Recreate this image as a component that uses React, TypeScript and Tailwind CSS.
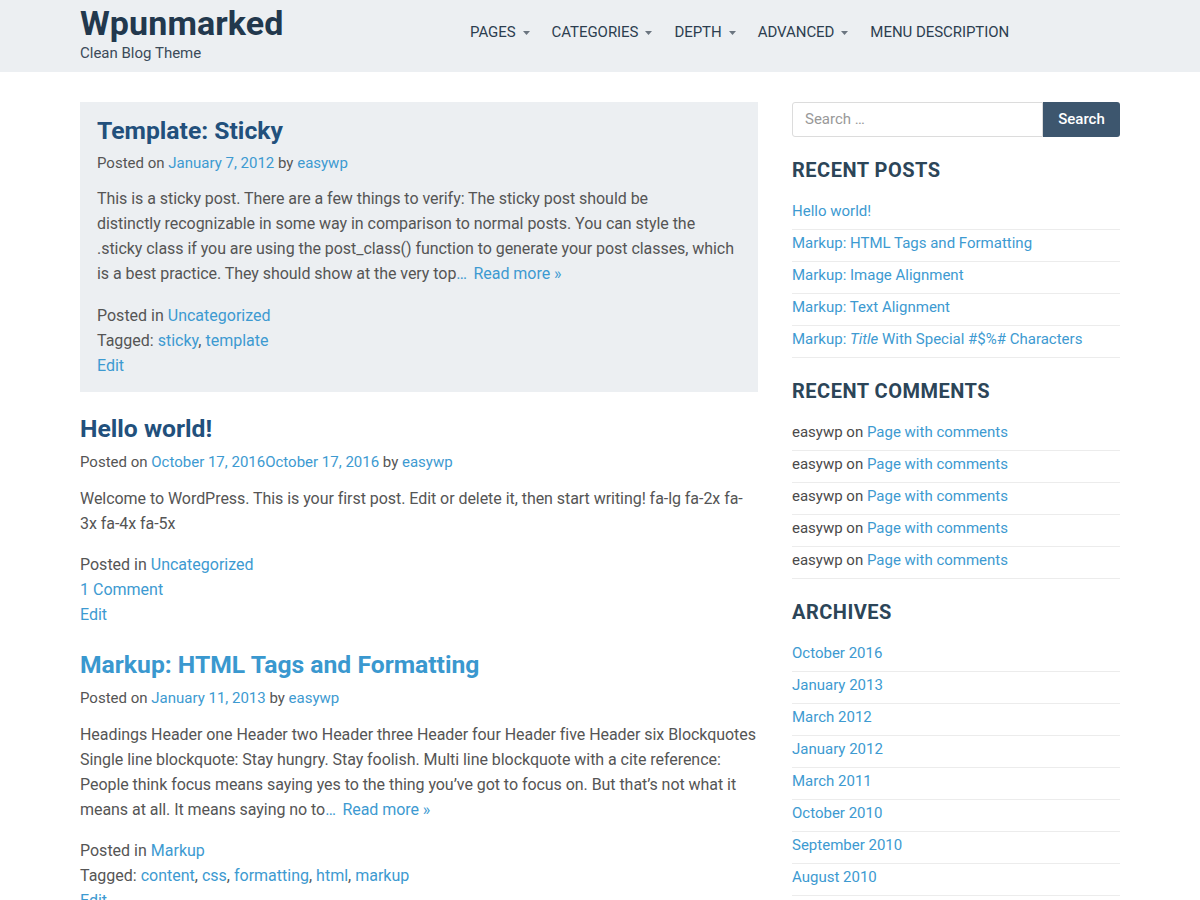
import React from 'react'

const link = 'text-[#3d9ad1]'

function Caret() {
    return (
        <svg width="7" height="4" viewBox="0 0 7 4" className="ml-[7px] mt-[1px]">
            <path d="M0 0h7L3.5 4z" fill="#6b7580" />
        </svg>
    )
}

const nav = [
    { label: 'PAGES', sub: true },
    { label: 'CATEGORIES', sub: true },
    { label: 'DEPTH', sub: true },
    { label: 'ADVANCED', sub: true },
    { label: 'MENU DESCRIPTION', sub: false },
]

function Header() {
    return (
        <header className="bg-[#eceff2] h-[72px]">
            <div className="w-[1040px] mx-auto flex items-start">
                <div className="w-[390px] shrink-0 pt-[4px]">
                    <h1 className="text-[34px] leading-[38px] font-bold text-[#22384d] tracking-[0.1px]">Wpunmarked</h1>
                    <p className="text-[15px] leading-[20px] mt-[1px] text-[#3b4a59]">Clean Blog Theme</p>
                </div>
                <nav className="flex items-center gap-[22px] h-[64px] tracking-[-0.05px]">
                    {nav.map((n) => (
                        <div key={n.label} className="flex items-center text-[15px] text-[#2c3e50]">
                            <span>{n.label}</span>
                            {n.sub && <Caret />}
                        </div>
                    ))}
                </nav>
            </div>
        </header>
    )
}

function Meta({ children, sticky }: { children: React.ReactNode; sticky?: boolean }) {
    return <p className={`text-[15px] leading-[25px] text-[#555] ${sticky ? 'mt-[4px]' : 'mt-[5px]'}`}>{children}</p>
}

// the excerpt's ellipsis sits tight on the last word, then a gap before the link
function ReadMore() {
    return (
        <span className={link}>
            <span className="pr-[5px] tracking-[1.5px]">…</span>Read more »
        </span>
    )
}

const title = 'text-[24.7px] leading-[32px] font-bold'
const body = 'text-[16px] leading-[25px] text-[#555] tracking-[-0.05px]'

function Main() {
    return (
        <main className="w-[678px] shrink-0">
            {/* sticky */}
            <article className="bg-[#eceff2] px-[17px] pt-[13px] pb-[14px] mb-[21px]">
                <h2 className={`${title} text-[#22507c]`}>Template: Sticky</h2>
                <Meta sticky>
                    Posted on <span className={link}>January 7, 2012</span> by <span className={link}>easywp</span>
                </Meta>
                <p className={`${body} mt-[10px]`}>
                    This is a sticky post. There are a few things to verify: The sticky post should be<br />
                    distinctly recognizable in some way in comparison to normal posts. You can style the<br />
                    .sticky class if you are using the post_class() function to generate your post classes, which<br />
                    is a best practice. They should show at the very top<ReadMore />
                </p>
                <div className="text-[16px] leading-[25px] text-[#555] mt-[17px]">
                    <p>Posted in <span className={link}>Uncategorized</span></p>
                    <p>Tagged: <span className={link}>sticky</span>, <span className={link}>template</span></p>
                    <p className={link}>Edit</p>
                </div>
            </article>

            <article className="mb-[22px]">
                <h2 className={`${title} text-[#22507c]`}>Hello world!</h2>
                <Meta>
                    Posted on <span className={link}>October 17, 2016October 17, 2016</span> by <span className={link}>easywp</span>
                </Meta>
                <p className={`${body} mt-[11px]`}>
                    Welcome to WordPress. This is your first post. Edit or delete it, then start writing! fa-lg fa-2x fa-3x fa-4x fa-5x
                </p>
                <div className="text-[16px] leading-[25px] text-[#555] mt-[16px]">
                    <p>Posted in <span className={link}>Uncategorized</span></p>
                    <p className={link}>1 Comment</p>
                    <p className={link}>Edit</p>
                </div>
            </article>

            <article>
                <h2 className={`${title} text-[#3a98cf]`}>Markup: HTML Tags and Formatting</h2>
                <Meta>
                    Posted on <span className={link}>January 11, 2013</span> by <span className={link}>easywp</span>
                </Meta>
                <p className={`${body} mt-[11px] tracking-[-0.1px]`}>
                    Headings Header one Header two Header three Header four Header five Header six Blockquotes<br />
                    Single line blockquote: Stay hungry. Stay foolish. Multi line blockquote with a cite reference:<br />
                    People think focus means saying yes to the thing you’ve got to focus on. But that’s not what it<br />
                    means at all. It means saying no to<ReadMore />
                </p>
                <div className="text-[16px] leading-[25px] text-[#555] mt-[16px]">
                    <p>Posted in <span className={link}>Markup</span></p>
                    <p>
                        Tagged: <span className={link}>content</span>, <span className={link}>css</span>, <span className={link}>formatting</span>, <span className={link}>html</span>, <span className={link}>markup</span>
                    </p>
                    <p className={link}>Edit</p>
                </div>
            </article>
        </main>
    )
}

function Widget({ title, children }: { title: string; children: React.ReactNode }) {
    return (
        <section className="mt-[21px]">
            <h3 className="text-[20px] leading-[24px] font-bold text-[#2c4558] uppercase tracking-[0.5px]">{title}</h3>
            <ul className="mt-[16px]">{children}</ul>
        </section>
    )
}

function Item({ children }: { children: React.ReactNode }) {
    return <li className="text-[15px] leading-[22px] pt-[2px] pb-[7px] border-b border-[#ececec]">{children}</li>
}

const archives = ['October 2016', 'January 2013', 'March 2012', 'January 2012', 'March 2011', 'October 2010', 'September 2010', 'August 2010']

function Sidebar() {
    return (
        <aside className="w-[328px] shrink-0">
            <div className="flex h-[35px]">
                <div className="flex-1 border border-[#dcdcdc] rounded-l-[3px] flex items-center px-[12px] text-[15px] text-[#999]">
                    Search …
                </div>
                <div className="w-[77px] bg-[#3d566e] rounded-r-[3px] flex items-center justify-center text-white text-[15px] font-medium">
                    Search
                </div>
            </div>
            <Widget title="Recent Posts">
                <Item><span className={link}>Hello world!</span></Item>
                <Item><span className={link}>Markup: HTML Tags and Formatting</span></Item>
                <Item><span className={link}>Markup: Image Alignment</span></Item>
                <Item><span className={link}>Markup: Text Alignment</span></Item>
                <Item><span className={link}>Markup: <em>Title</em> With Special #$%# Characters</span></Item>
            </Widget>
            <Widget title="Recent Comments">
                {[0, 1, 2, 3, 4].map((i) => (
                    <Item key={i}>
                        <span className="text-[#4a4a4a]">easywp on </span>
                        <span className={link}>Page with comments</span>
                    </Item>
                ))}
            </Widget>
            <Widget title="Archives">
                {archives.map((a) => (
                    <Item key={a}><span className={link}>{a}</span></Item>
                ))}
            </Widget>
        </aside>
    )
}

export default function App() {
    return (
        <div className="font-['Roboto','Liberation_Sans',sans-serif] bg-white min-h-[900px]">
            <Header />
            <div className="w-[1040px] mx-auto flex justify-between pt-[30px]">
                <Main />
                <Sidebar />
            </div>
        </div>
    )
}
